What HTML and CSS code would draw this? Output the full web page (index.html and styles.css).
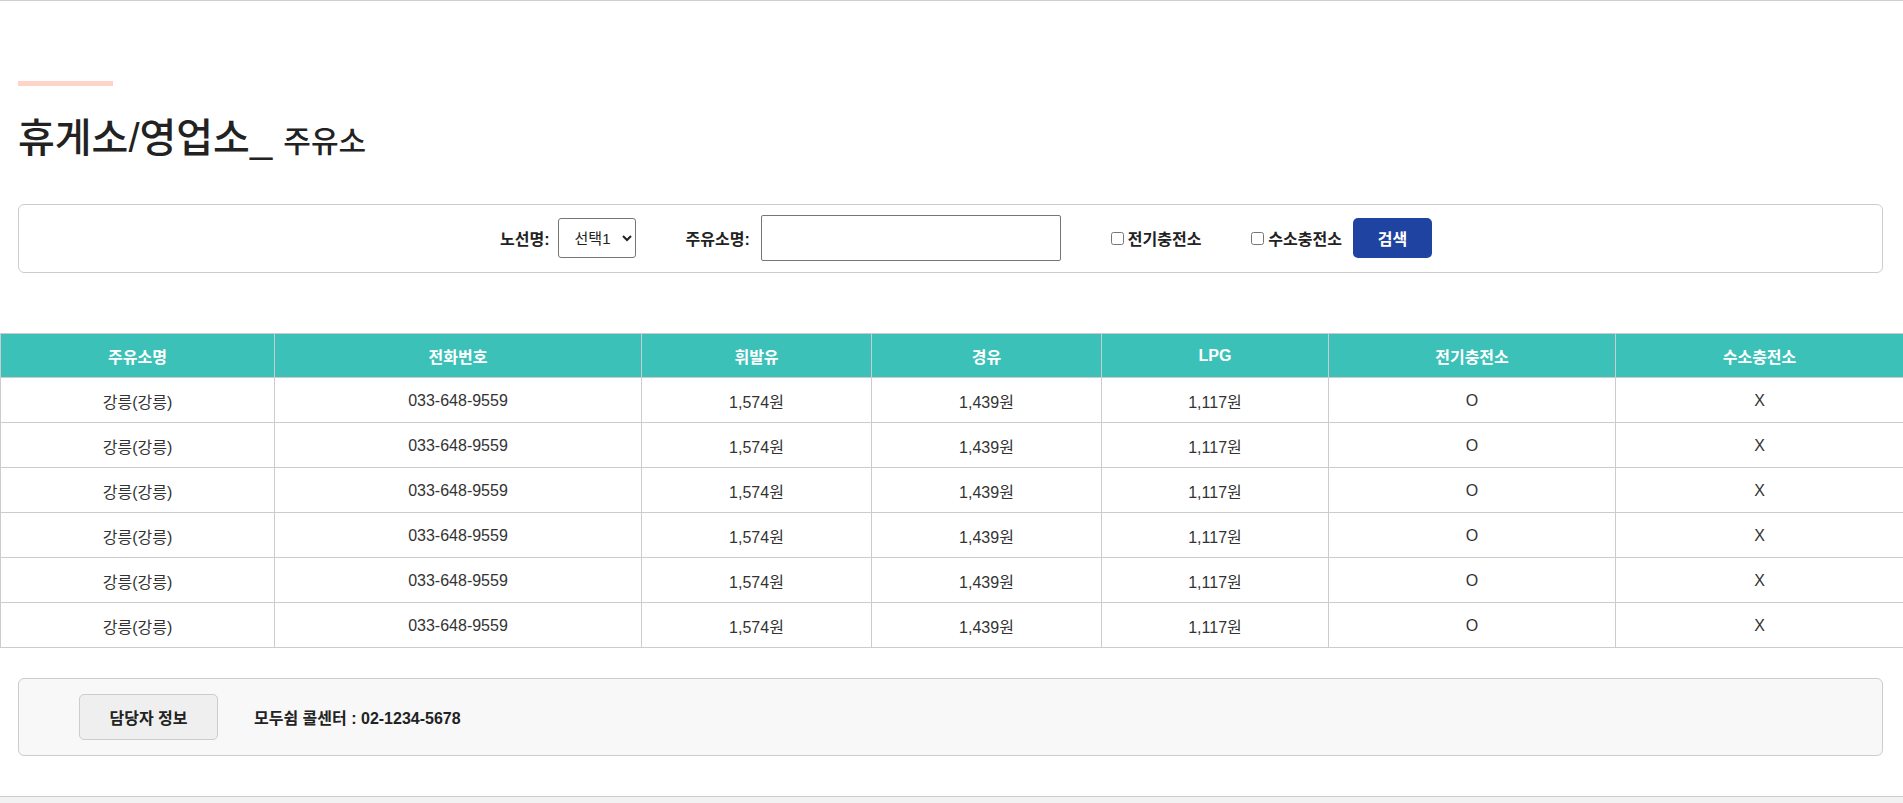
FILE: index.html
```html
<!DOCTYPE html>
<html lang="ko">
<head>
<meta charset="utf-8">
<title>휴게소/영업소_ 주유소</title>
<link rel="stylesheet" href="styles.css">
</head>
<body>
<div class="topline"></div>
<main class="page">
  <section class="title-area">
    <div class="accent"></div>
    <h1 class="page-title">휴게소/영업소_ <span class="sub">주유소</span></h1>
  </section>

  <form class="search-box">
    <div class="field">
      <label class="label" for="route">노선명:</label>
      <select id="route" class="select"><option>선택1</option></select>
    </div>
    <div class="field field-name">
      <label class="label" for="station">주유소명:</label>
      <input id="station" class="text-input" type="text">
    </div>
    <label class="check"><input type="checkbox" class="cb">전기충전소</label>
    <div class="field field-name">
      <label class="check"><input type="checkbox" class="cb">수소충전소</label>
      <button type="button" class="btn-search">검색</button>
    </div>
  </form>

  <table class="station-table">
    <colgroup>
      <col class="c-name"><col class="c-tel"><col class="c-gas"><col class="c-diesel"><col class="c-lpg"><col class="c-ev"><col class="c-h2">
    </colgroup>
    <thead>
      <tr><th>주유소명</th><th>전화번호</th><th>휘발유</th><th>경유</th><th>LPG</th><th>전기충전소</th><th>수소충전소</th></tr>
    </thead>
    <tbody>
      <tr><td>강릉(강릉)</td><td>033-648-9559</td><td>1,574원</td><td>1,439원</td><td>1,117원</td><td>O</td><td>X</td></tr>
      <tr><td>강릉(강릉)</td><td>033-648-9559</td><td>1,574원</td><td>1,439원</td><td>1,117원</td><td>O</td><td>X</td></tr>
      <tr><td>강릉(강릉)</td><td>033-648-9559</td><td>1,574원</td><td>1,439원</td><td>1,117원</td><td>O</td><td>X</td></tr>
      <tr><td>강릉(강릉)</td><td>033-648-9559</td><td>1,574원</td><td>1,439원</td><td>1,117원</td><td>O</td><td>X</td></tr>
      <tr><td>강릉(강릉)</td><td>033-648-9559</td><td>1,574원</td><td>1,439원</td><td>1,117원</td><td>O</td><td>X</td></tr>
      <tr><td>강릉(강릉)</td><td>033-648-9559</td><td>1,574원</td><td>1,439원</td><td>1,117원</td><td>O</td><td>X</td></tr>
    </tbody>
  </table>

  <section class="contact-box">
    <button type="button" class="btn-contact">담당자 정보</button>
    <p class="contact-text">모두쉼 콜센터 : 02-1234-5678</p>
  </section>
</main>
<footer class="bottom-bar"></footer>
</body>
</html>
```

FILE: styles.css
```css
* { box-sizing: border-box; }

html, body {
  margin: 0;
  padding: 0;
}

body {
  font-family: "Liberation Sans", "Noto Sans CJK KR", Arial, sans-serif;
  color: #222;
  background: #fff;
  overflow: hidden;
}

.topline {
  border-top: 1px solid #cfcfcf;
}

.title-area {
  padding: 80px 20px 0 18px;
}

.accent {
  width: 95px;
  height: 5px;
  background: #fdd4c7;
}

.page-title {
  margin: 28px 0 0;
  font-size: 40px;
  line-height: 48px;
  font-weight: 500;
  color: #222;
}

.page-title .sub {
  font-size: 30px;
}

.search-box {
  margin: 38px 20px 0 18px;
  border: 1px solid #cccccc;
  border-radius: 6px;
  padding: 10px 0 11px 31px;
  display: flex;
  justify-content: center;
  align-items: center;
  gap: 50px;
}

.field {
  display: flex;
  align-items: center;
  gap: 8px;
}

.field-name {
  gap: 11px;
}

.label {
  font-size: 16px;
  font-weight: 700;
  color: #222;
}

.select {
  width: 78px;
  height: 40px;
  padding: 0 4px 0 12px;
  font-family: inherit;
  font-size: 15px;
  color: #222;
  border: 1px solid #767676;
  border-radius: 3px;
  background: #fff;
}

.text-input {
  width: 300px;
  height: 46px;
  border: 1px solid #767676;
  border-radius: 2px;
  font-family: inherit;
  font-size: 15px;
  padding: 0 8px;
}

.check {
  display: flex;
  align-items: center;
  font-size: 16px;
  font-weight: 700;
  color: #222;
}

.cb {
  width: 13px;
  height: 13px;
  margin: 0 4px 0 0;
}

.btn-search {
  width: 79px;
  height: 40px;
  border: 0;
  border-radius: 5px;
  background: #1f43a0;
  color: #fff;
  font-family: inherit;
  font-size: 16px;
  font-weight: 700;
}

.station-table {
  width: 100%;
  margin-top: 60px;
  border-collapse: collapse;
  table-layout: fixed;
  font-size: 16px;
  color: #333;
}

.c-name { width: 274px; }
.c-tel { width: 367px; }
.c-gas { width: 230px; }
.c-diesel { width: 230px; }
.c-lpg { width: 227px; }
.c-ev { width: 287px; }
.c-h2 { width: 288px; }

.station-table th,
.station-table td {
  border: 1px solid #cccccc;
  text-align: center;
  padding: 0;
}

.station-table th {
  background: #3cc1b8;
  color: #fff;
  font-weight: 700;
  font-size: 16px;
  height: 44px;
}

.station-table td {
  height: 45px;
  padding-top: 1px;
}

.contact-box {
  margin: 30px 20px 0 18px;
  padding: 15px 0 15px 60px;
  background: #f8f8f8;
  border: 1px solid #cccccc;
  border-radius: 6px;
  display: flex;
  align-items: center;
  gap: 36px;
}

.btn-contact {
  width: 139px;
  height: 46px;
  background: #efefef;
  border: 1px solid #cccccc;
  border-radius: 5px;
  font-family: inherit;
  font-size: 16px;
  font-weight: 700;
  color: #222;
}

.contact-text {
  margin: 0;
  font-size: 16px;
  font-weight: 700;
  color: #222;
}

.bottom-bar {
  margin-top: 40px;
  height: 40px;
  background: #f2f2f2;
  border-top: 1px solid #cccccc;
}
```
